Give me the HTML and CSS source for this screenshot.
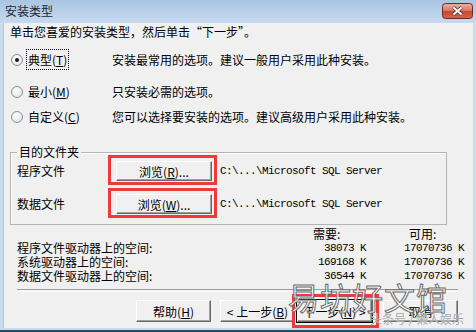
FILE: index.html
```html
<!DOCTYPE html>
<html lang="zh-CN">
<head>
    <meta charset="UTF-8">
    <title>安装类型</title>
    <link rel="stylesheet" href="styles.css">
</head>
<body>
    <div class="window">
        <!--제목줄-->
        <div class="titlebar">
            <span class="title">安装类型</span>
            <span class="close">
                <svg width="31" height="16" viewBox="0 0 31 16">
                    <defs>
                        <linearGradient id="cg" x1="0" y1="0" x2="0" y2="1">
                            <stop offset="0" stop-color="#eab0a2"/>
                            <stop offset=".48" stop-color="#d77a66"/>
                            <stop offset=".5" stop-color="#c4472f"/>
                            <stop offset="1" stop-color="#d2664c"/>
                        </linearGradient>
                    </defs>
                    <rect x=".5" y=".5" width="30" height="15" rx="3" fill="url(#cg)" stroke="#6e2a22"/>
                    <path d="M11.5 4.5l8 7M19.5 4.5l-8 7" stroke="#4d2c28" stroke-width="3.6"/>
                    <path d="M11.5 4.5l8 7M19.5 4.5l-8 7" stroke="#fff" stroke-width="2"/>
                </svg>
            </span>
        </div>

        <!--본문-->
        <div class="client">
            <p class="intro">单击您喜爱的安装类型，然后单击“下一步”。</p>

            <div class="options">
                <div class="opt">
                    <span class="radio on"></span>
                    <span class="opt-name"><span class="focus">典型(<u>T</u>)</span></span>
                    <span class="opt-desc">安装最常用的选项。建议一般用户采用此种安装。</span>
                </div>
                <div class="opt opt-min">
                    <span class="radio"></span>
                    <span class="opt-name">最小(<u>M</u>)</span>
                    <span class="opt-desc">只安装必需的选项。</span>
                </div>
                <div class="opt opt-custom">
                    <span class="radio"></span>
                    <span class="opt-name">自定义(<u>C</u>)</span>
                    <span class="opt-desc">您可以选择要安装的选项。建议高级用户采用此种安装。</span>
                </div>
            </div>

            <fieldset class="dest">
                <legend>目的文件夹</legend>
                <div class="dest-row">
                    <span>程序文件</span>
                    <button class="btn mark">浏览(<u>R</u>)...</button>
                    <span class="path">C:\...\Microsoft SQL Server</span>
                </div>
                <div class="dest-row">
                    <span>数据文件</span>
                    <button class="btn mark">浏览(<u>W</u>)...</button>
                    <span class="path">C:\...\Microsoft SQL Server</span>
                </div>
            </fieldset>

            <div class="space">
                <span></span>
                <span class="sp-head">需要:</span>
                <span class="sp-head sp-avail">可用:</span>

                <span>程序文件驱动器上的空间:</span>
                <span class="num">38073 K</span>
                <span class="num">17070736 K</span>

                <span>系统驱动器上的空间:</span>
                <span class="num">169168 K</span>
                <span class="num">17070736 K</span>

                <span>数据文件驱动器上的空间:</span>
                <span class="num">36544 K</span>
                <span class="num">17070736 K</span>
            </div>

            <div class="sep"></div>

            <div class="actions">
                <button class="btn">帮助(<u>H</u>)</button>
                <button class="btn btn-back">&lt; 上一步(<u>B</u>)</button>
                <button class="btn btn-default mark mark-next">下一步(<u>N</u>) &gt;</button>
                <button class="btn btn-cancel">取消</button>
            </div>
        </div>

        <div class="taskbar"></div>

        <!--워터마크-->
        <div class="watermark">
            <span class="wm-big">易坊好文馆</span>
            <span class="wm-small">头条号 / 懒人娱乐</span>
        </div>
    </div>
</body>
</html>
```

FILE: styles.css
```css
html,
body,
p {
    margin: 0;
    padding: 0;
}

body {
    font-family: "Noto Sans CJK SC", "Liberation Sans", sans-serif;
    font-size: 12px;
    color: #000;
    background-color: #c9dbee;
}

/*창*/
.window {
    position: relative;
    display: flex;
    flex-direction: column;
    width: 476px;
    height: 332px;
    background-color: #c9dbee;
}

/*제목줄*/
.titlebar {
    display: flex;
    align-items: flex-start;
    height: 23px;
    padding: 0 3px 0 5px;
    box-sizing: border-box;
    background: linear-gradient(#abc6e2, #c6d9ee);
}

.title {
    line-height: 22px;
    color: #1b2733;
}

.close {
    display: flex;
    margin: 3px 0 0 auto;
}

/*본문*/
.client {
    flex: 1;
    margin: 0 3px 2px;
    padding: 2px 9px 0 6px;
    background-color: #f0f0f0;
    border-left: 1px solid #b7c6d6;
    line-height: 14px;
}

/*라디오*/
.options {
    margin-top: 14px;
}

.opt {
    display: grid;
    grid-template-columns: 13px 79px 1fr;
    column-gap: 5px;
    align-items: center;
}

.opt-min {
    margin-top: 18px;
}

.opt-custom {
    margin-top: 11px;
}

.radio {
    width: 10px;
    height: 10px;
    margin-left: 1px;
    border: 1px solid #8b8f94;
    border-radius: 50%;
    background: radial-gradient(circle at 40% 35%, #fff, #dcdcdc);
    position: relative;
}

.radio.on::after {
    content: "";
    position: absolute;
    top: 3px;
    left: 3px;
    width: 4px;
    height: 4px;
    border-radius: 50%;
    background-color: #1b1b1b;
}

.focus {
    outline: 1px dotted #000;
    outline-offset: 1px;
}

/*목적 폴더*/
.dest {
    margin: 21px 17px 0 0;
    padding: 2px 6px 10px;
    border: 1px solid #b4b4b4;
    box-shadow: inset 1px 1px 0 #fff;
}

.dest legend {
    padding: 0 2px;
    line-height: 14px;
}

.dest-row {
    display: grid;
    grid-template-columns: 99px 96px 1fr;
    align-items: center;
    height: 20px;
}

.dest-row + .dest-row {
    margin-top: 13px;
}

.path {
    padding-left: 8px;
    font-family: "Liberation Mono", monospace;
    font-size: 11px;
    letter-spacing: -0.6px;
}

/*버튼*/
.btn {
    width: 75px;
    height: 22px;
    padding: 0;
    font-family: inherit;
    font-size: 12px;
    color: #000;
    background-color: #f0f0f0;
    border: 1px solid;
    border-color: #fff #696969 #696969 #fff;
    box-shadow: inset -1px -1px 0 #a0a0a0;
}

.dest-row .btn {
    width: 96px;
    height: 20px;
}

/*빨간 표시*/
.mark {
    position: relative;
}

.mark::after {
    content: "";
    position: absolute;
    top: -7px;
    left: -9px;
    right: -6px;
    bottom: -5px;
    border: 3px solid #ee3a3a;
}

.mark-next::after {
    top: -7px;
    left: -6px;
    right: -8px;
    bottom: -7px;
}

/*공간*/
.space {
    display: grid;
    grid-template-columns: 1fr 53px 61px;
    column-gap: 37px;
    margin-top: 2px;
    padding-left: 7px;
}

.sp-avail {
    padding-left: 6px;
}

.num {
    text-align: right;
    font-family: "Liberation Mono", monospace;
    font-size: 11px;
    letter-spacing: -0.6px;
}

.sep {
    height: 1px;
    margin: 6px 6px 0 7px;
    border-top: 1px solid #a0a0a0;
    border-bottom: 1px solid #fff;
}

/*하단 버튼*/
.actions {
    display: flex;
    justify-content: flex-end;
    margin-top: 8px;
    padding-right: 6px;
}

.btn-back {
    margin-left: 9px;
}

.btn-default {
    margin-left: 2px;
    outline: 1px solid #000;
}

.btn-cancel {
    margin-left: 11px;
}

.taskbar {
    height: 2px;
    background-color: #1d4d68;
}

/*워터마크*/
.watermark {
    position: absolute;
    left: 288px;
    top: 280px;
    pointer-events: none;
}

.wm-big {
    display: block;
    font-size: 31px;
    line-height: 34px;
    letter-spacing: 1px;
    color: rgba(255, 255, 255, .9);
    -webkit-text-stroke: 1px #6a6a6a;
}

.wm-small {
    display: block;
    margin: -2px 0 0 82px;
    font-size: 12px;
    line-height: 14px;
    color: #a4a4a4;
    text-shadow: 0 0 1px #fff;
}
```
